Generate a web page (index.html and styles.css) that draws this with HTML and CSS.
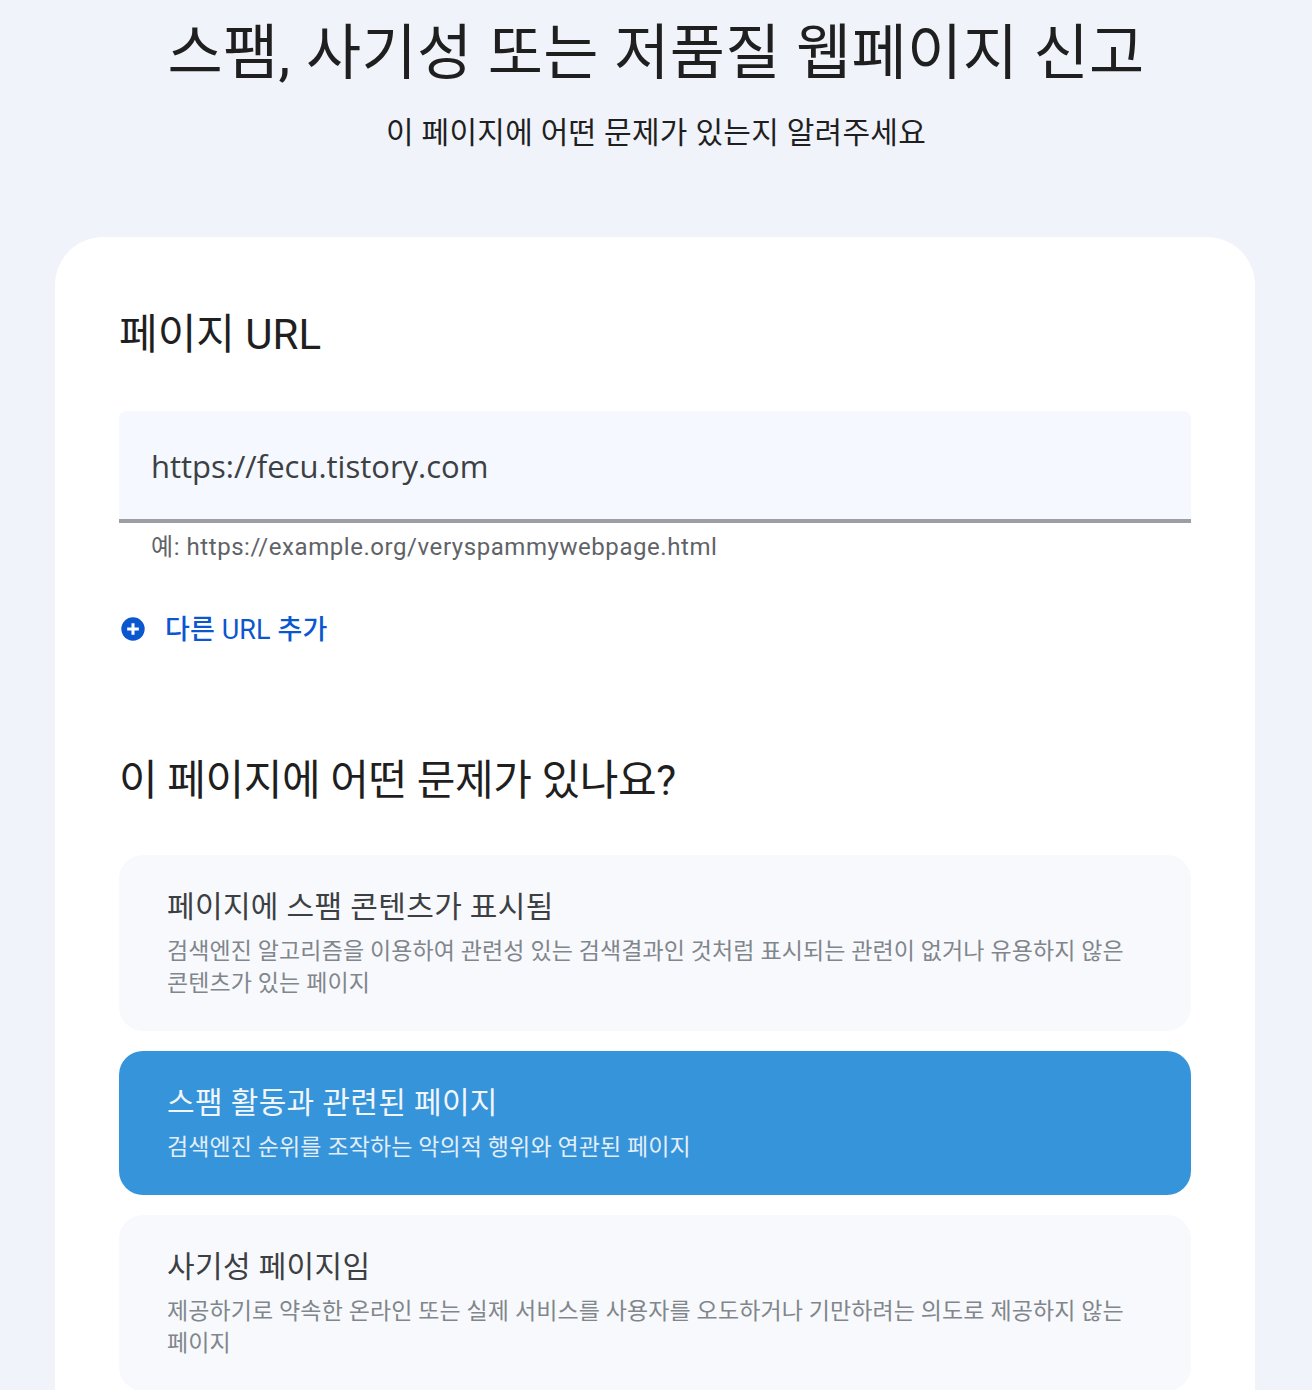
FILE: index.html
```html
<!DOCTYPE html>
<html lang="ko">

<head>
    <meta charset="UTF-8">
    <title>스팸, 사기성 또는 저품질 웹페이지 신고</title>
    <link rel="stylesheet" href="styles.css">
</head>

<body>
    <header class="top">
        <h1>스팸, 사기성 또는 저품질 웹페이지 신고</h1>
        <p class="subtitle">이 페이지에 어떤 문제가 있는지 알려주세요</p>
    </header>
    <main class="card">
        <h2 class="url-title">페이지 URL</h2>
        <div class="field">https://fecu.tistory.com</div>
        <div class="hint">예: https://example.org/veryspammywebpage.html</div>
        <a class="add-url" href="#">
            <svg width="24" height="24" viewBox="0 0 24 24">
                <circle cx="12" cy="12" r="10" fill="#0b57d0"/>
                <path d="M12 7v10M7 12h10" stroke="#fff" stroke-width="2.6"/>
            </svg>
            <span>다른 URL 추가</span>
        </a>
        <h2 class="issue-title">이 페이지에 어떤 문제가 있나요?</h2>
        <div class="options">
            <div class="option">
                <div class="name">페이지에 스팸 콘텐츠가 표시됨</div>
                <div class="desc">검색엔진 알고리즘을 이용하여 관련성 있는 검색결과인 것처럼 표시되는 관련이 없거나 유용하지 않은 콘텐츠가 있는 페이지</div>
            </div>
            <div class="option selected">
                <div class="name">스팸 활동과 관련된 페이지</div>
                <div class="desc">검색엔진 순위를 조작하는 악의적 행위와 연관된 페이지</div>
            </div>
            <div class="option">
                <div class="name">사기성 페이지임</div>
                <div class="desc">제공하기로 약속한 온라인 또는 실제 서비스를 사용자를 오도하거나 기만하려는 의도로 제공하지 않는 페이지</div>
            </div>
        </div>
    </main>
</body>

</html>
```

FILE: styles.css
```css
html, body {
    height: 1390px;
    overflow: hidden;
}

body {
    margin: 0;
    background: #f0f3fa;
    color: #1f1f1f;
    font-family: "Roboto", "Noto Sans CJK KR", sans-serif;
}

.top {
    text-align: center;
    height: 237px;
}

h1 {
    margin: 0;
    padding-top: 18px;
    font-size: 60px;
    line-height: 72px;
    font-weight: 400;
    letter-spacing: .35px;
}

.subtitle {
    margin: 25px 0 0;
    font-size: 30px;
    line-height: 36px;
    letter-spacing: .26px;
}

.card {
    width: 1072px;
    margin-left: 55px;
    padding: 72px 64px 64px;
    background: #fff;
    border-radius: 48px;
}

h2 {
    margin: 0;
    font-weight: 400;
    font-size: 42px;
    line-height: 52px;
}

.field {
    margin-top: 50px;
    height: 106px;
    padding: 2px 32px 0;
    display: flex;
    align-items: center;
    background: #f5f8ff;
    border-bottom: 4px solid #9d9ea3;
    border-radius: 8px 8px 0 0;
    font-family: "Open Sans", sans-serif;
    font-size: 31px;
    color: #3c4043;
}

.hint {
    margin-top: 8px;
    padding-left: 32px;
    font-size: 24px;
    line-height: 32px;
    letter-spacing: .56px;
    color: #5f6368;
}

.add-url {
    display: flex;
    align-items: center;
    gap: 18px;
    margin-top: 50px;
    height: 32px;
    font-size: 27px;
    font-weight: 450;
    color: #0b57d0;
    text-decoration: none;
}

.add-url svg {
    width: 28px;
    height: 28px;
}

.add-url span {
    margin-bottom: 3px;
    letter-spacing: .1px;
}

.issue-title {
    margin-top: 110px;
    letter-spacing: -.4px;
}

.options {
    margin-top: 48px;
    display: flex;
    flex-direction: column;
    gap: 20px;
}

.option {
    padding: 32px 48px 31px;
    background: #f8f9fd;
    border-radius: 24px;
}

.name {
    font-size: 30px;
    line-height: 40px;
    letter-spacing: .35px;
    color: #3c4043;
}

.desc {
    margin-top: 9px;
    font-size: 23px;
    line-height: 32px;
    letter-spacing: .1px;
    color: #80868b;
}

.selected {
    background: #3694da;
}

.selected .name {
    color: #f2f6fb;
}

.selected .desc {
    color: #e3eef8;
}
```
